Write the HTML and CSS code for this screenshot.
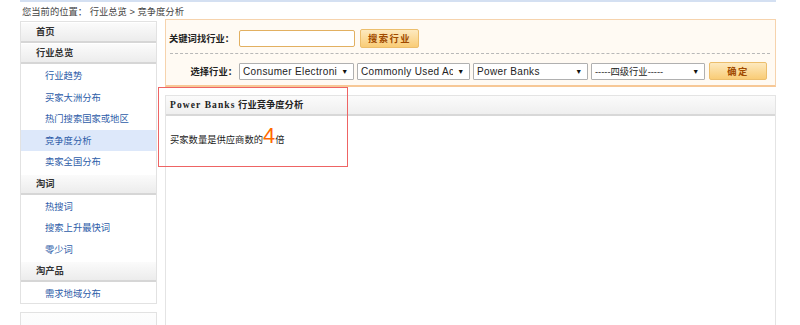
FILE: index.html
```html
<!DOCTYPE html>
<html lang="zh-CN">
<head>
  <meta charset="UTF-8" />
  <title>竞争度分析</title>
  <link rel="stylesheet" href="styles.css">
</head>
<body>
  <div class="page">
    <div class="topline"></div>
    <div class="crumb">您当前的位置： 行业总览 &gt; 竞争度分析</div>

    <div class="layout">
      <div class="side">
        <div class="side-box">
          <div class="side-head">首页</div>
          <div class="side-head">行业总览</div>
          <ul class="side-list">
            <li><a href="#">行业趋势</a></li>
            <li><a href="#">买家大洲分布</a></li>
            <li><a href="#">热门搜索国家或地区</a></li>
            <li class="on"><a href="#">竞争度分析</a></li>
            <li><a href="#">卖家全国分布</a></li>
          </ul>
          <div class="side-head">淘词</div>
          <ul class="side-list">
            <li><a href="#">热搜词</a></li>
            <li><a href="#">搜索上升最快词</a></li>
            <li><a href="#">零少词</a></li>
          </ul>
          <div class="side-head">淘产品</div>
          <ul class="side-list last">
            <li><a href="#">需求地域分布</a></li>
          </ul>
        </div>
        <div class="side-box side-empty"></div>
      </div>

      <div class="main">
        <div class="search">
          <div class="search-row">
            <span class="lbl">关键词找行业：</span>
            <input class="kw" type="text" value="" />
            <button class="btn btn-search">搜索行业</button>
          </div>
          <div class="search-row row2">
            <span class="lbl lbl2">选择行业：</span>
            <div class="sel s1"><span class="sel-txt">Consumer Electronics</span><span class="arrow">▼</span></div>
            <div class="sel s2"><span class="sel-txt">Commonly Used Accessories</span><span class="arrow">▼</span></div>
            <div class="sel s3"><span class="sel-txt">Power Banks</span><span class="arrow">▼</span></div>
            <div class="sel s4"><span class="sel-txt">-----四级行业-----</span><span class="arrow">▼</span></div>
            <button class="btn btn-ok">确定</button>
          </div>
        </div>

        <div class="panel">
          <div class="panel-head"><span class="en">Power Banks</span> 行业竞争度分析</div>
          <div class="panel-body">
            买家数量是供应商数的<span class="num">4</span>倍
          </div>
          <div class="mark"></div>
        </div>
      </div>
    </div>
  </div>
</body>
</html>
```

FILE: styles.css
```css
body {
  margin: 0;
  background: #fff;
  font-family: "Liberation Sans", "Noto Sans CJK SC", sans-serif;
  font-size: 9.3px;
  color: #333;
  overflow: hidden;
}

.page {
  width: 756px;
  margin-left: 20px;
  height: 325px;
  overflow: hidden;
}

.topline {
  height: 2px;
  background: #d4e0f2;
}

.crumb {
  height: 20px;
  line-height: 20px;
  padding-left: 2px;
  color: #444;
}

.layout {
  display: flex;
  gap: 8px;
  margin-top: -1px;
}

/* left menu */
.side {
  width: 137px;
  flex: none;
}

.side-box {
  border: 1px solid #e2e2e2;
  background: #fff;
}

.side-empty {
  margin-top: 8px;
  height: 40px;
  background: linear-gradient(#fdfdfd, #f6f8fb);
}

.side-head {
  height: 18px;
  line-height: 18px;
  padding-left: 15px;
  font-weight: bold;
  color: #333;
  background: linear-gradient(#fbfbfb, #ececec);
  border-top: 1px solid #fff;
  border-bottom: 2px solid #d6d6d6;
}

.side-list {
  list-style: none;
  margin: 0;
  padding: 1px 0;
}

.side-list li {
  height: 21.5px;
  line-height: 23px;
  padding-left: 24px;
}

.side-list.last {
  padding-bottom: 0;
}

.side-list.last li {
  height: 19.5px;
}

.side-list li.on {
  background: #dde8fa;
}

.side-list a {
  color: #2d5ca8;
  text-decoration: none;
}

/* search box */
.main {
  flex: 1;
  margin-top: -2px;
}

.search {
  background: #fffaf3;
  border: 1px solid #f6d3ad;
  border-bottom: 2px solid #f7c896;
  padding: 8px 8px 4px 3px;
}

.search-row {
  display: flex;
  align-items: center;
  height: 20px;
}

.row2 {
  margin-top: 13px;
  position: relative;
}

.row2::before {
  content: "";
  position: absolute;
  left: 1px;
  right: -3px;
  top: -8px;
  border-top: 1px dashed #b8b8b8;
}

.lbl {
  font-weight: bold;
  color: #222;
  width: 70px;
  flex: none;
  white-space: nowrap;
}

.lbl2 {
  text-align: right;
  padding-right: 2px;
  width: 68px;
}

.kw {
  box-sizing: border-box;
  width: 116px;
  height: 17px;
  margin: 0 5px 0 0;
  padding: 1px 2px;
  border: 1px solid #e2b061;
  border-radius: 2px;
  background: #fff;
  outline: none;
  font-size: 10px;
}

.btn {
  box-sizing: border-box;
  border: 1px solid #ecbe6c;
  border-radius: 2px;
  background: linear-gradient(#fde9bf, #f9cc76);
  color: #a04a00;
  font-family: inherit;
  font-size: 9.3px;
  font-weight: bold;
  cursor: pointer;
  padding: 0;
}

.btn-search {
  width: 59px;
  height: 19px;
  letter-spacing: 1.5px;
}

.btn-ok {
  width: 58px;
  height: 18px;
  margin-left: 4px;
  letter-spacing: 1.5px;
}

.sel {
  box-sizing: border-box;
  display: flex;
  align-items: center;
  height: 17px;
  margin-left: 3px;
  border: 1px solid #b0b0b0;
  border-radius: 1px;
  background: #fff;
  font-family: "Liberation Sans", "Noto Sans CJK SC", sans-serif;
  font-size: 10px;
  letter-spacing: 0.35px;
  color: #222;
  overflow: hidden;
}

.s1 { width: 115px; margin-left: 0; }
.s2 { width: 113px; }
.s3 { width: 115px; }
.s4 { width: 114px; }

.sel-txt {
  flex: 1;
  white-space: nowrap;
  overflow: hidden;
  padding-left: 3px;
}

.s4 .sel-txt {
  font-size: 9.3px;
  letter-spacing: 0;
}

.arrow {
  flex: none;
  width: 16px;
  font-size: 7px;
  text-align: center;
  color: #111;
}

/* result panel */
.panel {
  position: relative;
  margin-top: 8px;
  height: 240px;
  border: 1px solid #e4e4e4;
  border-bottom: none;
}

.panel-head {
  height: 18px;
  line-height: 18px;
  padding-left: 4px;
  font-weight: bold;
  color: #222;
  background: linear-gradient(#fbfbfb, #efefef);
  border-bottom: 2px solid #d8d8d8;
}

.panel-head .en {
  font-family: "Liberation Serif", serif;
  font-size: 9.5px;
  letter-spacing: 1.1px;
}

.panel-body {
  padding: 14px 4px;
  color: #222;
}

.num {
  font-family: "Liberation Sans", sans-serif;
  font-size: 22px;
  color: #ff6a00;
  line-height: 12px;
}

.mark {
  position: absolute;
  left: -8px;
  top: -9px;
  width: 188px;
  height: 78px;
  border: 1px solid #ee6464;
}
```
